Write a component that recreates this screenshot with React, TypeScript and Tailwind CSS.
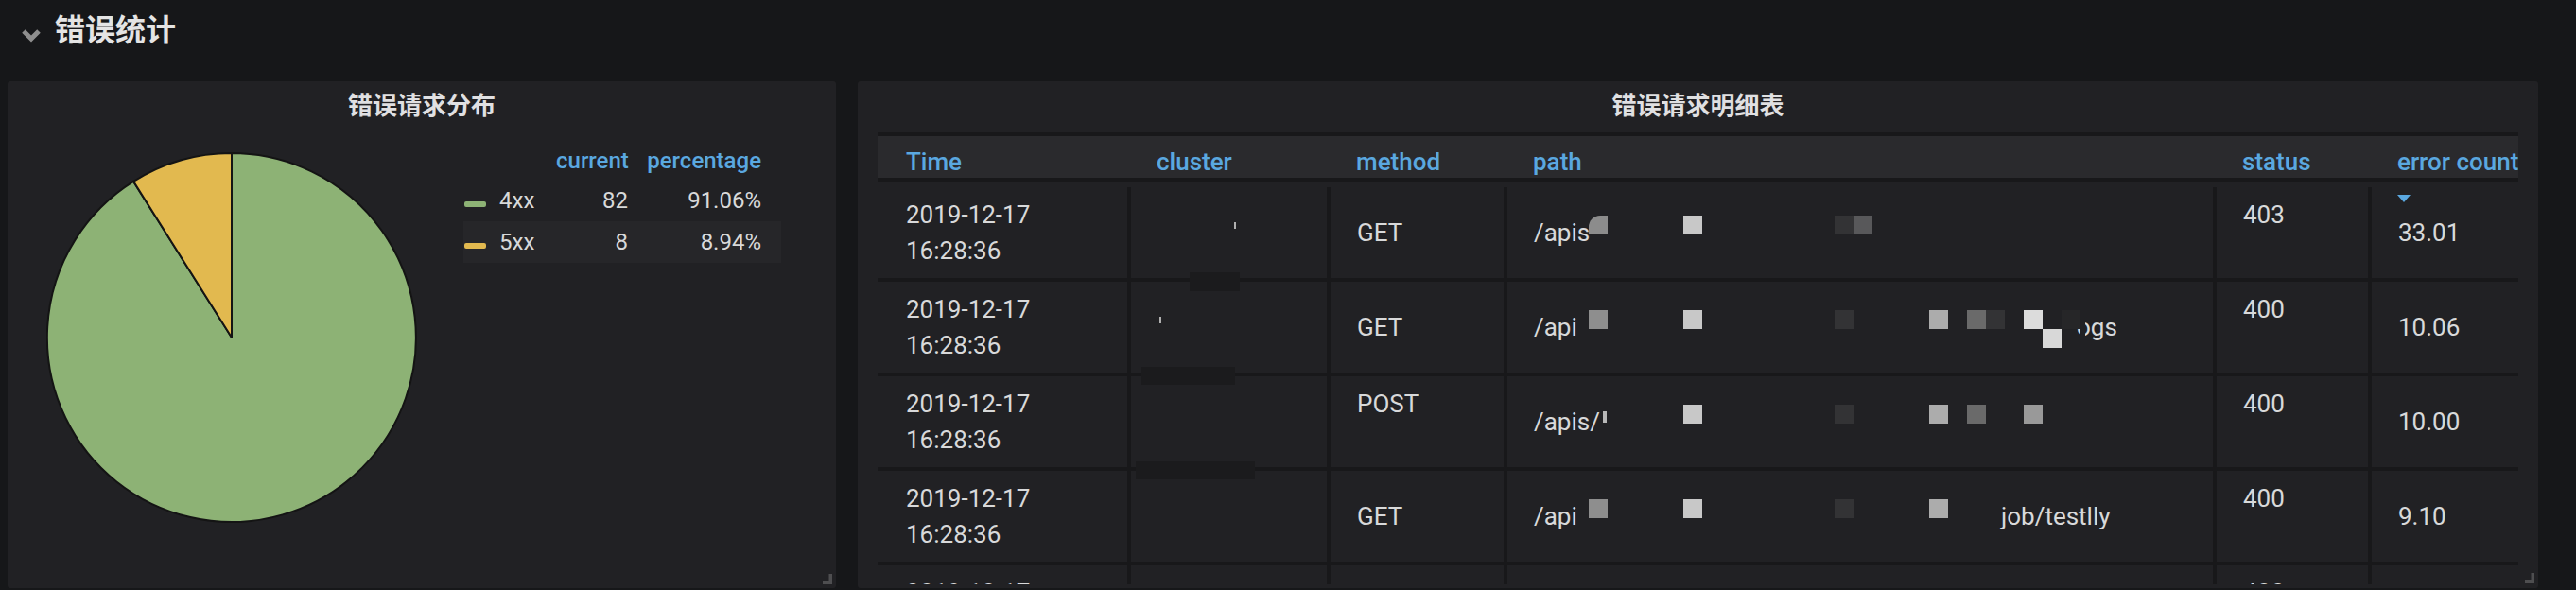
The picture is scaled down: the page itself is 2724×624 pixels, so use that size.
import React from 'react';

type Block = { x: number; y: number; w?: number; h?: number; c: string; r?: boolean };

const BLUE = 'text-[#5aa8e0]';

function Chevron() {
  return (
    <svg width="22" height="15" viewBox="0 0 22 15" className="mt-[10px] shrink-0">
      <path d="M3 3 L11 11 L19 3" fill="none" stroke="#8e8e8e" strokeWidth="5" />
    </svg>
  );
}

function ResizeHandle({ className }: { className: string }) {
  return (
    <svg width="10" height="11" viewBox="0 0 10 11" className={`absolute ${className}`}>
      <rect x="6.5" y="0" width="3.5" height="11" fill="#4e4e50" />
      <rect x="0" y="7" width="7" height="4" fill="#4e4e50" />
    </svg>
  );
}

function Pie() {
  return (
    <svg width="392" height="392" viewBox="0 0 392 392" className="mt-[11px] shrink-0">
      <path d="M196 196 L196 1 A195 195 0 1 1 92.1 30.9 Z" fill="#8db275" stroke="#141414" strokeWidth="2" strokeLinejoin="round" />
      <path d="M196 196 L92.1 30.9 A195 195 0 0 1 196 1 Z" fill="#e2b94f" stroke="#141414" strokeWidth="2" strokeLinejoin="round" />
    </svg>
  );
}

function Legend() {
  const rows = [
    { name: '4xx', cur: '82', pct: '91.06%', sw: 'bg-[#8db275]', bg: '' },
    { name: '5xx', cur: '8', pct: '8.94%', sw: 'bg-[#e2b94f]', bg: 'bg-[#262629]' },
  ];
  return (
    <div className="ml-[49px] w-[336px] text-[24px]">
      <div className={`grid grid-cols-[98px_76px_141px] h-[40px] pt-[3px] leading-[34px] font-medium ${BLUE}`}>
        <span />
        <span className="text-right whitespace-nowrap">current</span>
        <span className="text-right whitespace-nowrap">percentage</span>
      </div>
      {rows.map((r) => (
        <div key={r.name} className={`grid grid-cols-[38px_60px_76px_141px] h-[44px] leading-[44px] items-center ${r.bg}`}>
          <div className="flex items-center h-full">
            <div className={`ml-[1px] mt-[8px] w-[23px] h-[6px] rounded-[2px] ${r.sw}`} />
          </div>
          <span>{r.name}</span>
          <span className="text-right">{r.cur}</span>
          <span className="text-right">{r.pct}</span>
        </div>
      ))}
    </div>
  );
}

function PiePanel() {
  return (
    <div className="relative w-[876px] h-[536px] shrink-0 bg-[#212124] rounded-[3px]">
      <div className="h-[46px] pt-[8px] text-center text-[26px] leading-[36px] font-semibold text-[#e0e0e2]">错误请求分布</div>
      <div className="flex items-start pl-[41px] pt-[18px]">
        <Pie />
        <Legend />
      </div>
      <ResizeHandle className="right-[4px] bottom-[4px]" />
    </div>
  );
}

type Row = {
  date: string;
  time: string;
  method: string;
  methodTop?: boolean;
  path: React.ReactNode;
  blocks: Block[];
  status: string;
  count: string;
  arrow?: boolean;
};

const W = ['w-[268px]', 'w-[211px]', 'w-[187px]', 'w-[750px]', 'w-[164px]', 'w-[155px]'];

const rows: Row[] = [
  {
    date: '2019-12-17',
    time: '16:28:36',
    method: 'GET',
    path: <span>/apis</span>,
    blocks: [
      { x: 86, y: 30, c: 'bg-[#8c8c8c]', r: true },
      { x: 186, y: 30, c: 'bg-[#c8c8c8]' },
      { x: 346, y: 30, c: 'bg-[#333335]' },
      { x: 366, y: 30, c: 'bg-[#58585a]' },
    ],
    status: '403',
    count: '33.01',
    arrow: true,
  },
  {
    date: '2019-12-17',
    time: '16:28:36',
    method: 'GET',
    path: (
      <>
        <span className="inline-block w-[574px]">/api</span>
        <span>ogs</span>
      </>
    ),
    blocks: [
      { x: 86, y: 30, c: 'bg-[#8e8e8e]' },
      { x: 186, y: 30, c: 'bg-[#c8c8c8]' },
      { x: 346, y: 30, c: 'bg-[#333335]' },
      { x: 446, y: 30, c: 'bg-[#acacac]' },
      { x: 486, y: 30, c: 'bg-[#6a6a6a]' },
      { x: 506, y: 30, c: 'bg-[#333335]' },
      { x: 546, y: 30, c: 'bg-[#dcdcdc]' },
      { x: 586, y: 30, c: 'bg-[#262628]' },
      { x: 606, y: 30, w: 5, h: 30, c: 'bg-[#212124]' },
      { x: 566, y: 50, c: 'bg-[#d8d8d8]' },
    ],
    status: '400',
    count: '10.06',
  },
  {
    date: '2019-12-17',
    time: '16:28:36',
    method: 'POST',
    methodTop: true,
    path: <span>/apis/</span>,
    blocks: [
      { x: 101, y: 37, w: 4, h: 12, c: 'bg-[#b8b8b8]' },
      { x: 186, y: 30, c: 'bg-[#c8c8c8]' },
      { x: 346, y: 30, c: 'bg-[#333335]' },
      { x: 446, y: 30, c: 'bg-[#acacac]' },
      { x: 486, y: 30, c: 'bg-[#6a6a6a]' },
      { x: 546, y: 30, c: 'bg-[#999999]' },
    ],
    status: '400',
    count: '10.00',
  },
  {
    date: '2019-12-17',
    time: '16:28:36',
    method: 'GET',
    path: (
      <>
        <span className="inline-block w-[494px]">/api</span>
        <span>job/testlly</span>
      </>
    ),
    blocks: [
      { x: 86, y: 30, c: 'bg-[#8e8e8e]' },
      { x: 186, y: 30, c: 'bg-[#c8c8c8]' },
      { x: 346, y: 30, c: 'bg-[#333335]' },
      { x: 446, y: 30, c: 'bg-[#acacac]' },
    ],
    status: '400',
    count: '9.10',
  },
  {
    date: '2019-12-17',
    time: '16:28:36',
    method: 'GET',
    path: <span>/api</span>,
    blocks: [],
    status: '400',
    count: '8.02',
  },
];

const SEP = 'border-r-[4px] border-[#18181a]';

function TableRow({ r }: { r: Row }) {
  return (
    <div className="flex h-[100px] border-b-[4px] border-[#18181a]">
      <div className={`${W[0]} ${SEP} pl-[30px] flex flex-col justify-center leading-[38px]`}>
        <span>{r.date}</span>
        <span>{r.time}</span>
      </div>
      <div className={`${W[1]} ${SEP}`} />
      <div className={`${W[2]} ${SEP} pl-[28px] flex leading-[38px] ${r.methodTop ? 'items-start pt-[10px]' : 'items-center'}`}>
        {r.method}
      </div>
      <div className={`${W[3]} ${SEP} relative pl-[28px] flex items-center leading-[38px] whitespace-nowrap`}>
        <div>{r.path}</div>
        {r.blocks.map((b, i) => (
          <div
            key={i}
            className={`absolute ${b.c} ${b.r ? 'rounded-tl-[12px]' : ''}`}
            style={{ left: b.x, top: b.y, width: b.w ?? 20, height: b.h ?? 20 }}
          />
        ))}
      </div>
      <div className={`${W[4]} ${SEP} pl-[28px] pt-[10px] leading-[38px]`}>{r.status}</div>
      <div className={`${W[5]} relative pl-[28px] flex items-center leading-[38px]`}>
        {r.arrow && (
          <div className="absolute left-[27px] top-[8px] w-0 h-0 border-x-[7px] border-x-transparent border-t-[8px] border-t-[#5aa8e0]" />
        )}
        {r.count}
      </div>
    </div>
  );
}

function TablePanel() {
  const heads = ['Time', 'cluster', 'method', 'path', 'status', 'error count'];
  return (
    <div className="relative w-[1777px] h-[536px] shrink-0 bg-[#212124] rounded-[3px]">
      <div className="h-[46px] pt-[8px] text-center text-[26px] leading-[36px] font-semibold text-[#e0e0e2]">错误请求明细表</div>
      <div className="ml-[21px] mt-[8px] w-[1735px] text-[26px]">
        <div className="flex h-[52px] border-y-[4px] border-[#18181a] bg-[#2a2a2d]">
          {heads.map((h, i) => (
            <div
              key={h}
              className={`${W[i]} ${i === 0 ? 'pl-[30px]' : 'pl-[27px]'} pt-[9px] leading-[36px] font-medium whitespace-nowrap overflow-hidden ${BLUE}`}
            >
              {h}
            </div>
          ))}
        </div>
        <div className="relative mt-[6px] h-[420px] overflow-hidden">
          {rows.map((r, i) => (
            <TableRow key={i} r={r} />
          ))}
          <div className="absolute left-[330px] top-[90px] w-[53px] h-[20px] bg-[#1b1b1d]" />
          <div className="absolute left-[279px] top-[190px] w-[99px] h-[19px] bg-[#1b1b1d]" />
          <div className="absolute left-[273px] top-[290px] w-[126px] h-[19px] bg-[#1b1b1d]" />
          <div className="absolute left-[377px] top-[37px] w-[2px] h-[7px] bg-[#b0b0b0]" />
          <div className="absolute left-[298px] top-[137px] w-[2px] h-[7px] bg-[#b0b0b0]" />
        </div>
      </div>
      <ResizeHandle className="right-[4px] bottom-[5px]" />
    </div>
  );
}

export default function App() {
  return (
    <div className="w-[2724px] h-[624px] bg-[#161719] overflow-hidden font-[family-name:Roboto,'Noto_Sans_CJK_SC',sans-serif] text-[#d8d9da]">
      <div className="flex items-center h-[64px] pl-[22px]">
        <Chevron />
        <span className="ml-[14px] text-[32px] font-bold text-[#e4e4e4] leading-none">错误统计</span>
      </div>
      <div className="flex pt-[22px] pl-[8px] gap-[23px]">
        <PiePanel />
        <TablePanel />
      </div>
    </div>
  );
}
